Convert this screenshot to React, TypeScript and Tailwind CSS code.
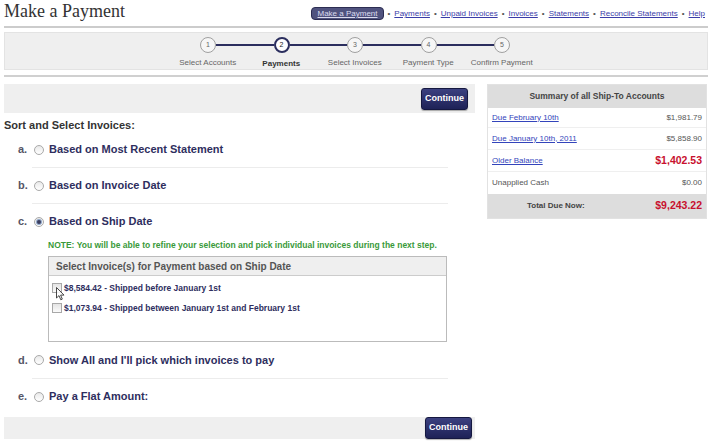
import React from "react";

const navy = "text-[#2e2e5e]";

function Radio({ checked = false }: { checked?: boolean }) {
  return (
    <div className="w-[10px] h-[10px] rounded-full border border-[#a9a9a9] bg-gradient-to-b from-[#e9e9e9] to-[#ffffff] flex items-center justify-center shrink-0">
      {checked && <div className="w-[4px] h-[4px] rounded-full bg-[#3b3f60] ring-1 ring-[#8fa6c8]" />}
    </div>
  );
}

function Option({ letter, label, checked = false, h = "h-[35px]" }: { letter: string; label: string; checked?: boolean; h?: string }) {
  return (
    <div className={`flex items-center ${h} pl-[14px]`}>
      <span className="w-[16px] text-[11px] font-bold text-[#555566]">{letter}</span>
      <Radio checked={checked} />
      <span className={`ml-[5px] text-[11px] font-bold ${navy}`}>{label}</span>
    </div>
  );
}

function Sep() {
  return <div className="ml-[28px] w-[416px] h-[1px] bg-[#ececec]" />;
}

function ContinueBtn() {
  return (
    <button className="w-[47px] h-[22px] rounded-[3px] border border-[#151840] bg-gradient-to-b from-[#3c4180] to-[#1e2257] text-white text-[9px] font-bold shadow-[0_1px_1px_rgba(0,0,0,0.3)]">
      Continue
    </button>
  );
}

function Checkbox() {
  return <div className="w-[10px] h-[10px] border border-[#a8a8a8] bg-gradient-to-b from-[#e4e4e4] to-[#fbfbfb] shrink-0" />;
}

const steps = ["Select Accounts", "Payments", "Select Invoices", "Payment Type", "Confirm Payment"];

function Stepper() {
  return (
    <div className="mx-[4px] mt-[4px] w-[704px] h-[38px] bg-[#efefef] border border-[#e3e3e3] flex flex-col">
      <div className="flex items-center pl-[195px] pt-[4px]">
        {steps.map((s, i) => (
          <React.Fragment key={s}>
            <div
              className={
                i === 1
                  ? "w-[16px] h-[16px] rounded-full border-2 border-[#2b2e5e] bg-white flex items-center justify-center text-[7px] text-[#222] shrink-0"
                  : "w-[16px] h-[16px] rounded-full border-[1.5px] border-[#a0a0a0] bg-[#f6f6f6] flex items-center justify-center text-[7px] text-[#666] shrink-0"
              }
            >
              {i + 1}
            </div>
            {i < 4 && <div className="w-[57.5px] h-[2px] bg-[#2b2e5e]" />}
          </React.Fragment>
        ))}
      </div>
      <div className="flex pl-[166px] mt-[5px]">
        {steps.map((s, i) => (
          <div
            key={s}
            className={`w-[73.5px] text-center text-[8px] leading-[10px] whitespace-nowrap ${i === 1 ? "font-bold text-[#333] mt-[1px]" : "text-[#666]"}`}
          >
            {s}
          </div>
        ))}
      </div>
    </div>
  );
}

function Nav() {
  const links = ["Payments", "Unpaid Invoices", "Invoices", "Statements", "Reconcile Statements", "Help"];
  return (
    <div className="flex items-center gap-[4px] mt-[7px] text-[8px] leading-[11px]">
      <span className="px-[5px] h-[13px] flex items-center rounded-[4px] border border-[#2c2d52] bg-[#50537f] text-[#dcdcef] underline">
        Make a Payment
      </span>
      {links.map((l) => (
        <React.Fragment key={l}>
          <span className="text-[#555]">•</span>
          <span className="text-[#3a3ca8] underline">{l}</span>
        </React.Fragment>
      ))}
    </div>
  );
}

function Summary() {
  return (
    <div className="self-start w-[220px] border border-[#e2e2e2] bg-white text-[8px]">
      <div className="h-[23px] bg-[#dddddd] flex items-center justify-center font-bold text-[8.5px] text-[#444]">
        Summary of all Ship-To Accounts
      </div>
      <div className="h-[20px] flex items-center justify-between px-[4px] border-b border-[#efefef]">
        <span className="text-[#3344bb] underline">Due February 10th</span>
        <span className="text-[#555]">$1,981.79</span>
      </div>
      <div className="h-[22px] flex items-center justify-between px-[4px] border-b border-[#efefef]">
        <span className="text-[#3344bb] underline">Due January 10th, 2011</span>
        <span className="text-[#555]">$5,858.90</span>
      </div>
      <div className="h-[22px] flex items-center justify-between px-[4px] border-b border-[#efefef]">
        <span className="text-[#3344bb] underline">Older Balance</span>
        <span className="text-[#c8102e] font-bold text-[10.5px]">$1,402.53</span>
      </div>
      <div className="h-[22px] flex items-center justify-between px-[4px]">
        <span className="text-[#555]">Unapplied Cash</span>
        <span className="text-[#555]">$0.00</span>
      </div>
      <div className="h-[24px] bg-[#dddddd] flex items-center justify-between pl-[39px] pr-[4px]">
        <span className="font-bold text-[#444]">Total Due Now:</span>
        <span className="text-[#c8102e] font-bold text-[10.5px]">$9,243.22</span>
      </div>
    </div>
  );
}

export default function App() {
  return (
    <div className="w-[715px] h-[447px] overflow-hidden bg-white font-['Liberation_Sans',Arial,sans-serif]">
      <div className="flex items-start justify-between h-[26px] pl-[4px] pr-[10px]">
        <h1 className="font-['Liberation_Serif',serif] text-[18px] leading-[22px] text-[#333]">Make a Payment</h1>
        <Nav />
      </div>
      <div className="mx-[4px] w-[704px] h-[2px] bg-[#cccccc]" />
      <Stepper />
      <div className="mx-[4px] mt-[5px] w-[704px] h-[2px] bg-[#d0d0d0]" />

      <div className="flex items-start px-[4px] mt-[7px] gap-[12px]">
        <div className="w-[471px] flex flex-col">
          <div className="h-[29px] bg-[#efefef] flex items-center justify-end pr-[7px]">
            <ContinueBtn />
          </div>
          <div className="mt-[5px] text-[11px] leading-[14px] font-bold text-[#333]">Sort and Select Invoices:</div>
          <Option letter="a." label="Based on Most Recent Statement" />
          <Sep />
          <Option letter="b." label="Based on Invoice Date" />
          <Sep />
          <Option letter="c." label="Based on Ship Date" checked />
          <div className="ml-[44px] text-[8.5px] leading-[10px] font-bold text-[#3a9a3a] mt-[1px] whitespace-nowrap">
            NOTE: You will be able to refine your selection and pick individual invoices during the next step.
          </div>
          <div className="ml-[44px] mt-[6px] w-[399px] h-[86px] border border-[#bbbbbb] bg-white">
            <div className="h-[19px] bg-[#efefef] border-b border-[#cccccc] flex items-center pl-[7px] text-[10px] font-bold text-[#555]">
              Select Invoice(s) for Payment based on Ship Date
            </div>
            <div className="flex flex-col gap-[6px] pt-[5px] pl-[3px]">
              <div className="relative flex items-center h-[14px] gap-[2px]">
                <Checkbox />
                <span className={`text-[8.5px] font-bold ${navy}`}>$8,584.42 - Shipped before January 1st</span>
                <svg className="absolute left-[4px] top-[6px]" width="9" height="14" viewBox="0 0 9 14">
                  <path d="M0.5 0.5 L0.5 11 L3 8.6 L4.8 12.8 L6.3 12.1 L4.6 8.1 L8 8.1 Z" fill="#ffffff" fillOpacity="0.85" stroke="#333" strokeWidth="0.9" strokeLinejoin="round" />
                </svg>
              </div>
              <div className="flex items-center h-[14px] gap-[2px]">
                <Checkbox />
                <span className={`text-[8.5px] font-bold ${navy}`}>$1,073.94 - Shipped between January 1st and February 1st</span>
              </div>
            </div>
          </div>
          <Option letter="d." label="Show All and I'll pick which invoices to pay" h="h-[36px]" />
          <Sep />
          <Option letter="e." label="Pay a Flat Amount:" />
          <div className="mt-[3px] h-[22px] bg-[#efefef] flex items-center justify-end pr-[3px]">
            <ContinueBtn />
          </div>
        </div>
        <Summary />
      </div>
    </div>
  );
}
